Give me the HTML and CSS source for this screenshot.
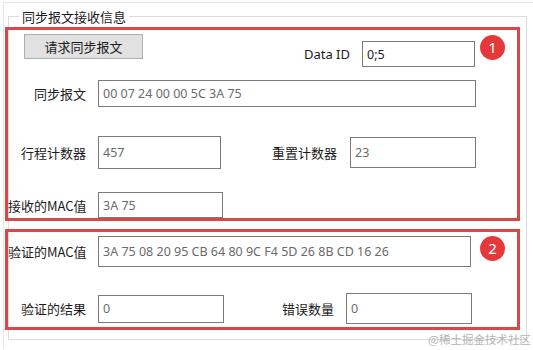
FILE: index.html
```html
<!DOCTYPE html>
<html lang="zh-CN">
<head>
    <meta charset="UTF-8">
    <meta name="viewport" content="width=device-width, initial-scale=1.0">
    <title>同步报文接收信息</title>
    <link rel="stylesheet" href="styles.css">
</head>
<body>
    <div class="panel">
        <fieldset class="groupbox">
            <legend>同步报文接收信息</legend>

            <!-- 接收部分 -->
            <section class="mark mark-recv">
                <span class="badge">1</span>
                <div class="row row-head">
                    <button class="btn" type="button">请求同步报文</button>
                    <div class="pair">
                        <label class="lbl lbl-id" for="dataId">Data ID</label>
                        <input class="field field-id" id="dataId" type="text" value="0;5">
                    </div>
                </div>
                <div class="row row-sync">
                    <label class="lbl" for="syncMsg">同步报文</label>
                    <input class="field field-sync" id="syncMsg" type="text" value="00 07 24 00 00 5C 3A 75" readonly>
                </div>
                <div class="row row-count">
                    <label class="lbl" for="tripCount">行程计数器</label>
                    <input class="field field-trip" id="tripCount" type="text" value="457" readonly>
                    <label class="lbl lbl-reset" for="resetCount">重置计数器</label>
                    <input class="field field-reset" id="resetCount" type="text" value="23" readonly>
                </div>
                <div class="row row-mac">
                    <label class="lbl" for="recvMac">接收的MAC值</label>
                    <input class="field field-mac" id="recvMac" type="text" value="3A 75" readonly>
                </div>
            </section>

            <!-- 验证部分 -->
            <section class="mark mark-check">
                <span class="badge">2</span>
                <div class="row row-verify">
                    <label class="lbl" for="checkMac">验证的MAC值</label>
                    <input class="field field-long" id="checkMac" type="text" value="3A 75 08 20 95 CB 64 80 9C F4 5D 26 8B CD 16 26" readonly>
                </div>
                <div class="row row-result">
                    <label class="lbl" for="result">验证的结果</label>
                    <input class="field field-result" id="result" type="text" value="0" readonly>
                    <label class="lbl lbl-err" for="errCount">错误数量</label>
                    <input class="field field-err" id="errCount" type="text" value="0" readonly>
                </div>
            </section>
        </fieldset>
        <span class="watermark">@稀土掘金技术社区</span>
    </div>
</body>
</html>
```

FILE: styles.css
```css
* {
    box-sizing: border-box;
}

body {
    margin: 0;
    font-family: "Noto Sans CJK SC", "Noto Sans", sans-serif;
    font-size: 13px;
    color: #1b1b1b;
    background-color: #fff;
}

.panel {
    position: relative;
    margin: 2px 0 0 3px;
    height: 346px;
    border-top: 1px solid #e6e6e6;
    border-left: 1px solid #e6e6e6;
}

.groupbox {
    margin: 5px 6px 0 4px;
    padding: 2px 0 9px 0;
    border: 1px solid #dcdcdc;
    min-width: 0;
}

.groupbox legend {
    margin-left: 10px;
    padding: 0 3px;
    line-height: 17px;
    font-size: 13px;
}

/* cadres rouges */
.mark {
    position: relative;
    margin: 0 6px 0 -4px;
    border: 3px solid #d84848;
}

.mark-recv {
    height: 194px;
    padding-top: 4px;
}

.mark-check {
    margin-top: 8px;
    height: 101px;
    padding-top: 2px;
}

.badge {
    position: absolute;
    left: 472px;
    top: 5px;
    width: 25px;
    height: 25px;
    border-radius: 50%;
    background-color: #e5383b;
    color: #fff;
    font-family: "Noto Sans", sans-serif;
    font-size: 15px;
    line-height: 25px;
    text-align: center;
}

.mark-check .badge {
    top: 4px;
}

.row {
    display: flex;
    align-items: center;
}

.lbl {
    flex-shrink: 0;
    width: 78px;
    margin-right: 12px;
    text-align: right;
    white-space: nowrap;
}

.field {
    flex-shrink: 0;
    height: 27px;
    padding: 0 4px;
    border: 1px solid #7a7a7a;
    background-color: #fff;
    font-family: "Noto Sans", sans-serif;
    font-size: 12.5px;
    color: #6b6b6b;
    outline: none;
}

/* ligne 1 */
.row-head {
    align-items: flex-start;
}

.btn {
    margin-left: 16px;
    width: 119px;
    height: 25px;
    padding: 0;
    border: 1px solid #adadad;
    background-color: #e1e1e1;
    font-family: "Noto Sans CJK SC", sans-serif;
    font-size: 13px;
    color: #1b1b1b;
}

.pair {
    display: flex;
    align-items: center;
    margin: 7px 42px 0 auto;
}

.lbl-id {
    width: auto;
    font-family: "Noto Sans", sans-serif;
}

.field-id {
    width: 113px;
    height: 26px;
    color: #1b1b1b;
}

.row-sync {
    margin-top: 13px;
}

.field-sync {
    width: 378px;
}

.row-count {
    margin-top: 29px;
}

.field-trip {
    width: 123px;
    height: 33px;
}

.lbl-reset {
    width: 116px;
    margin-right: 13px;
}

.field-reset {
    width: 126px;
    height: 31px;
}

.row-mac {
    margin-top: 23px;
}

.field-mac {
    width: 125px;
    height: 26px;
}

/* partie verification */
.row-verify {
    margin-top: 2px;
}

.field-long {
    width: 373px;
    height: 31px;
}

.row-result {
    margin-top: 26px;
}

.field-result {
    width: 126px;
    height: 28px;
}

.lbl-err {
    width: 110px;
}

.field-err {
    width: 126px;
    height: 31px;
}

.watermark {
    position: absolute;
    left: 424px;
    top: 329px;
    font-size: 11.5px;
    line-height: 14px;
    color: #b4b4b4;
    white-space: nowrap;
}
```
